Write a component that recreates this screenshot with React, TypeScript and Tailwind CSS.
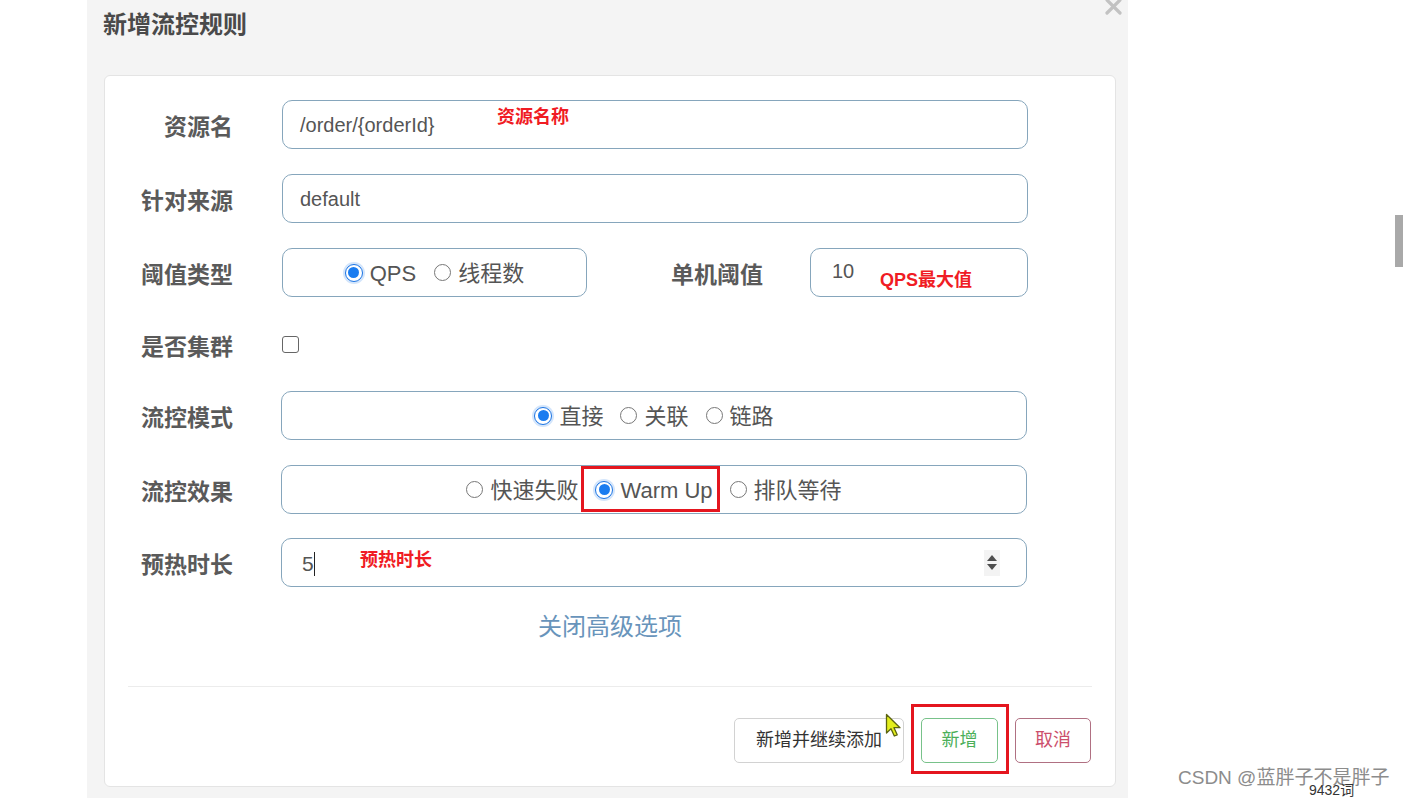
import React from 'react'

const FONT = '"Liberation Sans", "Noto Sans CJK SC", sans-serif'

function Radio({ checked }: { checked?: boolean }) {
  if (checked) {
    return (
      <span className="w-[18px] h-[18px] rounded-full border border-[#1b74e4] bg-white flex items-center justify-center shadow-[0_0_0_2px_rgba(80,150,240,0.25)] shrink-0">
        <span className="w-[11px] h-[11px] rounded-full bg-[#1a7cf0]" />
      </span>
    )
  }
  return <span className="w-[17px] h-[17px] rounded-full border border-[#777] bg-white shrink-0" />
}

function RadioItem({ checked, label }: { checked?: boolean; label: string }) {
  return (
    <span className="flex items-center gap-[7px]">
      <Radio checked={checked} />
      <span className="text-[22px] text-[#555] leading-[26px] mt-[3px]">{label}</span>
    </span>
  )
}

function Label({ text }: { text: string }) {
  return (
    <div className="w-[128px] text-right text-[23px] font-bold text-[#5a5a5a] leading-[30px] mt-[5px] shrink-0">
      {text}
    </div>
  )
}

const boxCls = 'h-[49px] border border-[#86a6bc] rounded-[10px] bg-white'

function Note({ text, className }: { text: string; className: string }) {
  return (
    <span className={'absolute text-[18px] font-bold text-[#f01c24] leading-[22px] ' + className}>{text}</span>
  )
}

export default function App() {
  return (
    <div className="relative w-[1403px] h-[799px] bg-white overflow-hidden" style={{ fontFamily: FONT }}>
      <div className="ml-[87px] w-[1041px] h-[798px] bg-[#f4f4f4] flex flex-col">
        {/* header */}
        <div className="h-[75px] flex justify-between items-start pl-[16px] pr-[5px]">
          <h1 className="mt-[10px] text-[24px] font-bold text-[#4a4a4a] leading-[30px]">新增流控规则</h1>
          <svg width="19" height="19" viewBox="0 0 19 19" className="-mt-[3px]">
            <path d="M3 3 L16 16 M16 3 L3 16" stroke="#c2c2c2" strokeWidth="3.2" strokeLinecap="round" />
          </svg>
        </div>

        {/* card */}
        <div className="ml-[17px] w-[1012px] h-[712px] bg-white border border-[#e4e4e4] rounded-[6px] flex flex-col">
          {/* 资源名 */}
          <div className="flex items-center mt-[24px]">
            <Label text="资源名" />
            <div className={'relative ml-[49px] w-[746px] flex items-center px-[17px] ' + boxCls}>
              <span className="text-[20px] text-[#555]">/order/{'{orderId}'}</span>
              <Note text="资源名称" className="left-[214px] top-[5px]" />
            </div>
          </div>

          {/* 针对来源 */}
          <div className="flex items-center mt-[25px]">
            <Label text="针对来源" />
            <div className={'ml-[49px] w-[746px] flex items-center px-[17px] ' + boxCls}>
              <span className="text-[20px] text-[#555]">default</span>
            </div>
          </div>

          {/* 阈值类型 / 单机阈值 */}
          <div className="flex items-center mt-[25px]">
            <Label text="阈值类型" />
            <div className={'ml-[49px] w-[305px] flex items-center justify-center gap-[18px] ' + boxCls}>
              <RadioItem checked label="QPS" />
              <RadioItem label="线程数" />
            </div>
            <div className="w-[176px] text-right text-[23px] font-bold text-[#5a5a5a] leading-[30px] mt-[5px]">单机阈值</div>
            <div className={'relative ml-[47px] w-[218px] flex items-center px-[21px] ' + boxCls}>
              <span className="text-[20px] text-[#555] -mt-[4px]">10</span>
              <Note text="QPS最大值" className="left-[69px] top-[20px]" />
            </div>
          </div>

          {/* 是否集群 */}
          <div className="flex items-center h-[45px] mt-[25px]">
            <Label text="是否集群" />
            <span className="ml-[49px] w-[17px] h-[17px] border border-[#666] rounded-[3px] bg-white" />
          </div>

          {/* 流控模式 */}
          <div className="flex items-center mt-[24px]">
            <Label text="流控模式" />
            <div className={'ml-[48px] w-[746px] flex items-center justify-center gap-[17px] ' + boxCls}>
              <RadioItem checked label="直接" />
              <RadioItem label="关联" />
              <RadioItem label="链路" />
            </div>
          </div>

          {/* 流控效果 */}
          <div className="flex items-center mt-[25px]">
            <Label text="流控效果" />
            <div className={'ml-[48px] w-[746px] flex items-center justify-center gap-[17px] ' + boxCls}>
              <RadioItem label="快速失败" />
              <span className="relative">
                <RadioItem checked label="Warm Up" />
                <span className="absolute -left-[14px] -right-[7px] -top-[9px] -bottom-[8px] border-[3px] border-[#e4161f]" />
              </span>
              <RadioItem label="排队等待" />
            </div>
          </div>

          {/* 预热时长 */}
          <div className="flex items-center mt-[24px]">
            <Label text="预热时长" />
            <div className={'relative ml-[48px] w-[746px] flex items-center pl-[20px] pr-[26px] ' + boxCls}>
              <span className="text-[21px] text-[#555] mt-[2px]">5</span>
              <span className="w-[1px] h-[24px] bg-[#222] mt-[2px]" />
              <Note text="预热时长" className="left-[78px] top-[10px]" />
              <span className="flex-1" />
              <span className="w-[16px] h-[26px] bg-[#f3f3f3] flex flex-col items-center justify-center gap-[3px]">
                <span className="w-0 h-0 border-x-[5px] border-x-transparent border-b-[6px] border-b-[#4d4d4d]" />
                <span className="w-0 h-0 border-x-[5px] border-x-transparent border-t-[6px] border-t-[#4d4d4d]" />
              </span>
            </div>
          </div>

          {/* advanced toggle */}
          <div className="mt-[24px] flex justify-center">
            <span className="text-[24px] leading-[32px] text-[#6894bb]">关闭高级选项</span>
          </div>

          {/* divider */}
          <div className="mt-[43px] mx-[23px] h-[1px] bg-[#ececec]" />

          {/* footer buttons */}
          <div className="mt-[31px] flex justify-end gap-[17px] pr-[24px]">
            <button className="h-[45px] px-[21px] border border-[#d2d2d2] rounded-[5px] bg-white text-[18px] text-[#333]">
              新增并继续添加
            </button>
            <span className="relative">
              <button className="h-[45px] w-[77px] border border-[#78c28a] rounded-[5px] bg-white text-[18px] text-[#4caf5a]">
                新增
              </button>
              <span className="absolute -left-[10px] -right-[11px] -top-[14px] -bottom-[11px] border-[3px] border-[#e4161f]" />
            </span>
            <button className="h-[45px] w-[76px] border border-[#b07082] rounded-[5px] bg-white text-[18px] text-[#cc4f6c]">
              取消
            </button>
          </div>
        </div>
      </div>

      {/* mouse pointer */}
      <svg className="absolute left-[885px] top-[713px]" width="20" height="27" viewBox="0 0 20 27">
        <path d="M1.5 1.5 L1.5 20 L6 15.8 L9.3 23 L12.2 21.8 L9 14.7 L15 14.7 Z" fill="#e3ee1c" stroke="#5c6410" strokeWidth="1.3" strokeLinejoin="round" />
      </svg>

      {/* scrollbar thumb */}
      <div className="absolute right-0 top-[215px] w-[8px] h-[52px] bg-[#a9a9a9]" />

      {/* watermark */}
      <span className="absolute left-[1178px] top-[766px] text-[19px] leading-[24px] text-[#8c8c8c]">CSDN @蓝胖子不是胖子</span>
      <span className="absolute left-[1309px] top-[781px] text-[14px] leading-[18px] text-[#333]">9432词</span>
    </div>
  )
}
